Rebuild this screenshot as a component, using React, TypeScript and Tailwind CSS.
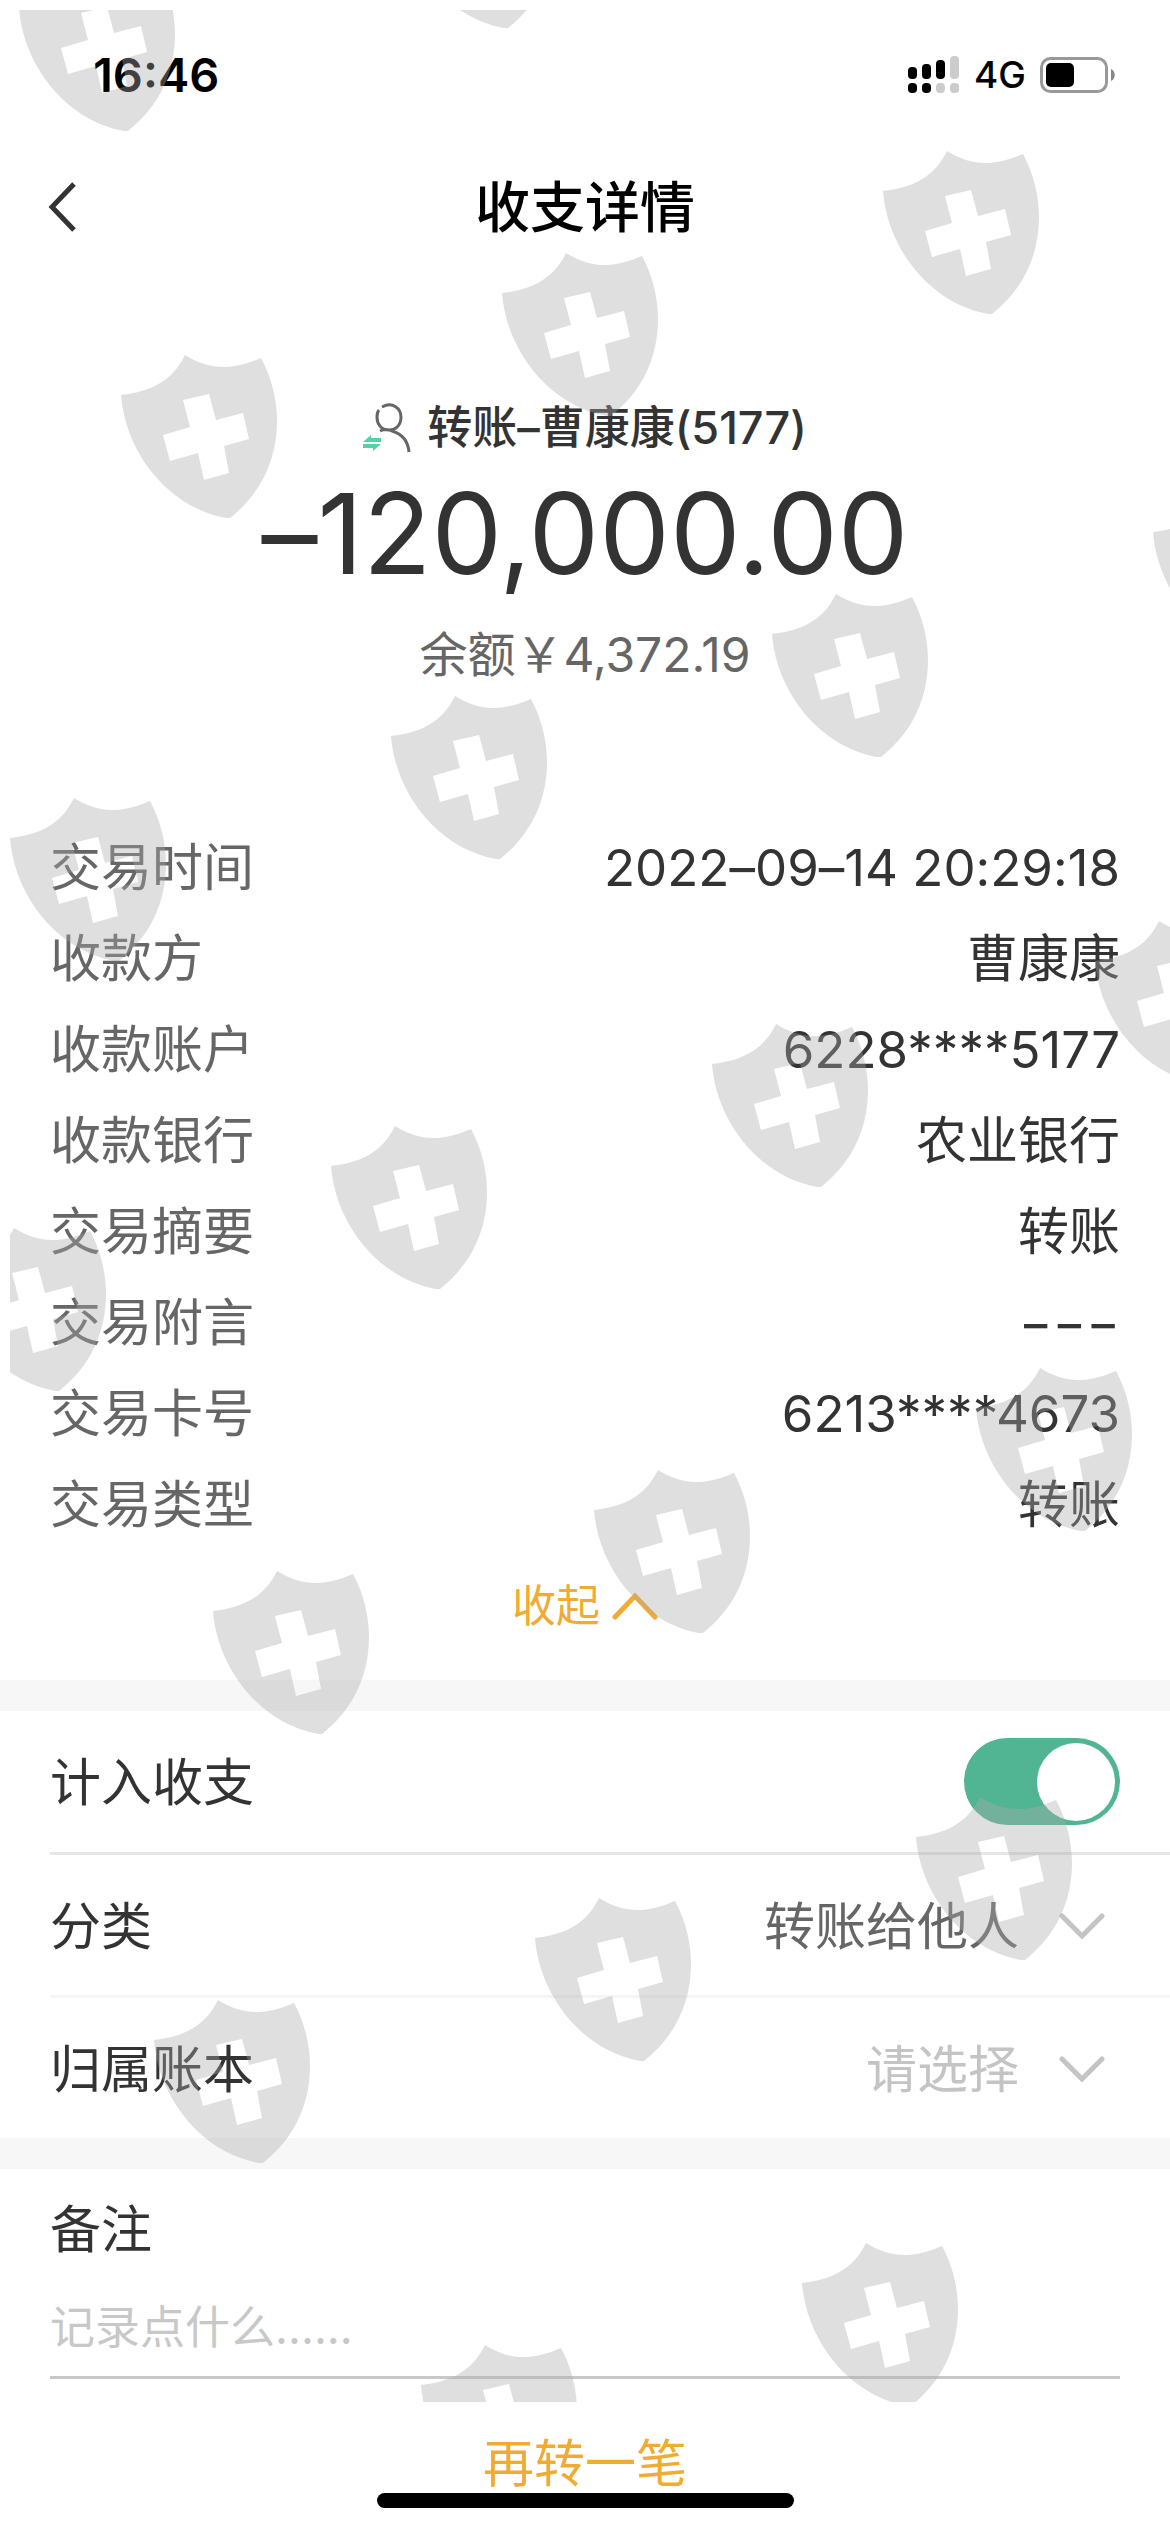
import { useState } from "react";
import type { JSX } from "react";

type Detail = { label: string; value: string };

const details: Detail[] = [
  { label: "交易时间", value: "2022–09–14 20:29:18" },
  { label: "收款方", value: "曹康康" },
  { label: "收款账户", value: "6228****5177" },
  { label: "收款银行", value: "农业银行" },
  { label: "交易摘要", value: "转账" },
  { label: "交易附言", value: "−−−" },
  { label: "交易卡号", value: "6213****4673" },
  { label: "交易类型", value: "转账" },
];

// Top-left corner of every shield, relative to the watermark layer
const shields: [number, number][] = [
  [389, -145],
  [9, -42],
  [873, 141],
  [492, 243],
  [111, 345],
  [1143, 482],
  [762, 584],
  [381, 686],
  [0, 788],
  [1085, 911],
  [702, 1014],
  [321, 1116],
  [-60, 1218],
  [966, 1358],
  [584, 1460],
  [203, 1561],
  [906, 1787],
  [525, 1888],
  [144, 1990],
  [792, 2233],
  [411, 2335],
];

function Watermark(): JSX.Element {
  return (
    <div className="pointer-events-none absolute top-2.5 right-0 bottom-[130px] left-2.5 overflow-hidden">
      <svg className="h-full w-full" fill="#aaaaaa" fillOpacity={0.376} aria-hidden="true">
        {shields.map(([x, y]) => (
          <path
            key={`${x}-${y}`}
            transform={`translate(${x} ${y})`}
            fillRule="evenodd"
            d="M0 40C28 37 51 27 64 0C88 15 110 16 140 3C151 23 156 46 156 66C156 102 142 137 109 163L105 163C45 152 4 95 0 40ZM62 45L88 39L95 65L122 58L128 84L103 91L108 118L83 125L77 98L49 106L42 80L69 72Z"
          />
        ))}
      </svg>
    </div>
  );
}

function StatusBar(): JSX.Element {
  return (
    <div className="flex h-[150px] items-center justify-between pr-[54px] pl-[93px] text-black">
      <span className="text-[47px] font-semibold">16:46</span>
      <div className="flex items-center gap-3.5">
        <svg width="52" height="38" viewBox="0 0 52 38" aria-hidden="true">
          <rect x="0" y="11" width="9" height="12" rx="4" />
          <rect x="14" y="8" width="9" height="15" rx="4" />
          <rect x="28" y="4" width="9" height="19" rx="4" />
          <rect x="42" y="0" width="9" height="23" rx="4" fill="#cccccc" />
          <rect x="0" y="27" width="9" height="10" rx="4" />
          <rect x="14" y="27" width="9" height="10" rx="4" />
          <rect x="28" y="27" width="9" height="10" rx="4" fill="#cccccc" />
          <rect x="42" y="27" width="9" height="10" rx="4" fill="#cccccc" />
        </svg>
        <span className="text-[37px] font-medium">4G</span>
        <svg width="76" height="36" viewBox="0 0 76 36" aria-hidden="true">
          <rect x="1.5" y="1.5" width="65" height="33" rx="9" fill="none" stroke="#999999" strokeWidth="3" />
          <rect x="6" y="6" width="28" height="24" rx="5" />
          <path d="M71 12C76 14 76 22 71 24Z" fill="#888888" />
        </svg>
      </div>
    </div>
  );
}

function TransferIcon(): JSX.Element {
  return (
    <svg width="48" height="50" viewBox="0 0 48 50" fill="none" aria-hidden="true">
      <path
        d="M19 4C30 -2 38 6 38 14C38 22 33 27 26 27C18 27 14 21 14 14C14 11 14 9 16 7M17 28C21 26 25 26 29 28C39 31 45 38 46 49"
        stroke="#666666"
        strokeWidth="3"
      />
      <path d="M0 39L8 32V35H18V39H0ZM0 41H18L10 48V45H0V41Z" fill="#50d2aa" />
    </svg>
  );
}

function ChevronDown(): JSX.Element {
  return (
    <svg
      width="46"
      height="28"
      viewBox="0 0 46 28"
      fill="none"
      stroke="#c4c4c4"
      strokeWidth="5"
      strokeLinecap="round"
      aria-hidden="true"
    >
      <path d="M3 3L23 23L43 3" />
    </svg>
  );
}

export default function App(): JSX.Element {
  const [expanded, setExpanded] = useState(true);
  const [counted, setCounted] = useState(true);

  return (
    <div className="relative min-h-screen overflow-hidden bg-white font-[Inter,'Noto_Sans_CJK_SC',sans-serif] text-[#333333]">
      <StatusBar />

      <header className="grid h-[114px] grid-cols-3 items-center px-12">
        <button type="button" aria-label="返回" className="justify-self-start">
          <svg width="28" height="50" viewBox="0 0 28 50" fill="none" stroke="#333333" strokeWidth="5" aria-hidden="true">
            <path d="M26 2L4 25L26 48" />
          </svg>
        </button>
        <h1 className="text-center text-[55px] font-medium text-black">收支详情</h1>
      </header>

      {/* calt off keeps the dashes and colons low between digits */}
      <main className="[font-feature-settings:'calt'_0]">
        <section className="px-[50px] pt-[134px]">
          <div className="flex items-center justify-center gap-4">
            <TransferIcon />
            <h2 className="text-[45px] leading-[60px] font-medium">转账–曹康康(5177)</h2>
          </div>
          <p className="mt-[15px] text-center text-[112px] leading-[120px]">–120,000.00</p>
          {/* \uffe5 is the full-width yen sign */}
          <p className="mt-8 text-center text-[48px] leading-[60px] text-[#666666]">
            {"余额\uffe54,372.19"}
          </p>

          {expanded ? (
            <dl className="mt-[138px] text-[51px]">
              {details.map((item) => (
                <div key={item.label} className="flex h-[91px] items-center justify-between">
                  <dt className="text-[#666666]">{item.label}</dt>
                  <dd>{item.value}</dd>
                </div>
              ))}
            </dl>
          ) : null}

          <button
            type="button"
            onClick={() => setExpanded(!expanded)}
            className="mx-auto mb-[19px] flex h-[110px] items-center gap-3 text-[44px] text-[#f0ab32]"
          >
            {expanded ? "收起" : "展开"}
            <svg
              width="46"
              height="28"
              viewBox="0 0 46 28"
              fill="none"
              stroke="currentColor"
              strokeWidth="5"
              strokeLinecap="round"
              aria-hidden="true"
            >
              <path d="M3 25L23 4L43 25" />
            </svg>
          </button>
        </section>

        <section className="border-y-[31px] border-[#f7f7f7] pl-[50px] text-[51px]">
          <div className="flex h-36 items-center justify-between border-b-3 border-[#e6e6e6] pr-[50px]">
            <label htmlFor="counted" className="pt-1">
              计入收支
            </label>
            <input
              id="counted"
              type="checkbox"
              role="switch"
              checked={counted}
              onChange={(e) => setCounted(e.target.checked)}
              className="flex h-[87px] w-[156px] appearance-none items-center justify-start rounded-full bg-[#cccccc] px-[5px] before:size-[78px] before:rounded-full before:bg-white checked:justify-end checked:bg-[#51b594]"
            />
          </div>
          <div className="flex h-[143px] items-center gap-10 border-b-3 border-[#f5f5f5] pt-1 pr-[65px]">
            <label htmlFor="category">分类</label>
            <select
              id="category"
              className="flex-1 appearance-none bg-transparent text-right text-[#666666] [text-align-last:right]"
            >
              <option>转账给他人</option>
            </select>
            <ChevronDown />
          </div>
          <div className="flex h-[140px] items-center gap-10 pt-1 pr-[65px]">
            <label htmlFor="book">归属账本</label>
            <select
              id="book"
              className="flex-1 appearance-none bg-transparent text-right text-[#c4c4c4] [text-align-last:right]"
            >
              <option>请选择</option>
            </select>
            <ChevronDown />
          </div>
        </section>

        <section className="px-[50px] pt-[26px]">
          <label htmlFor="note" className="block text-[51px] leading-[70px]">
            备注
          </label>
          <input
            id="note"
            type="text"
            placeholder="记录点什么......"
            className="mt-2.5 block h-[104px] w-full border-b-3 border-[#c8c8c8] pt-1 text-[45px] outline-none placeholder:text-[#c8c8c8]"
          />
        </section>
      </main>

      <footer className="flex flex-col items-center pt-14">
        <button type="button" className="text-[51px] leading-[58px] text-[#f0ab32]">
          再转一笔
        </button>
        <div className="h-[15px] w-[417px] rounded-full bg-black" />
      </footer>

      <Watermark />
    </div>
  );
}
